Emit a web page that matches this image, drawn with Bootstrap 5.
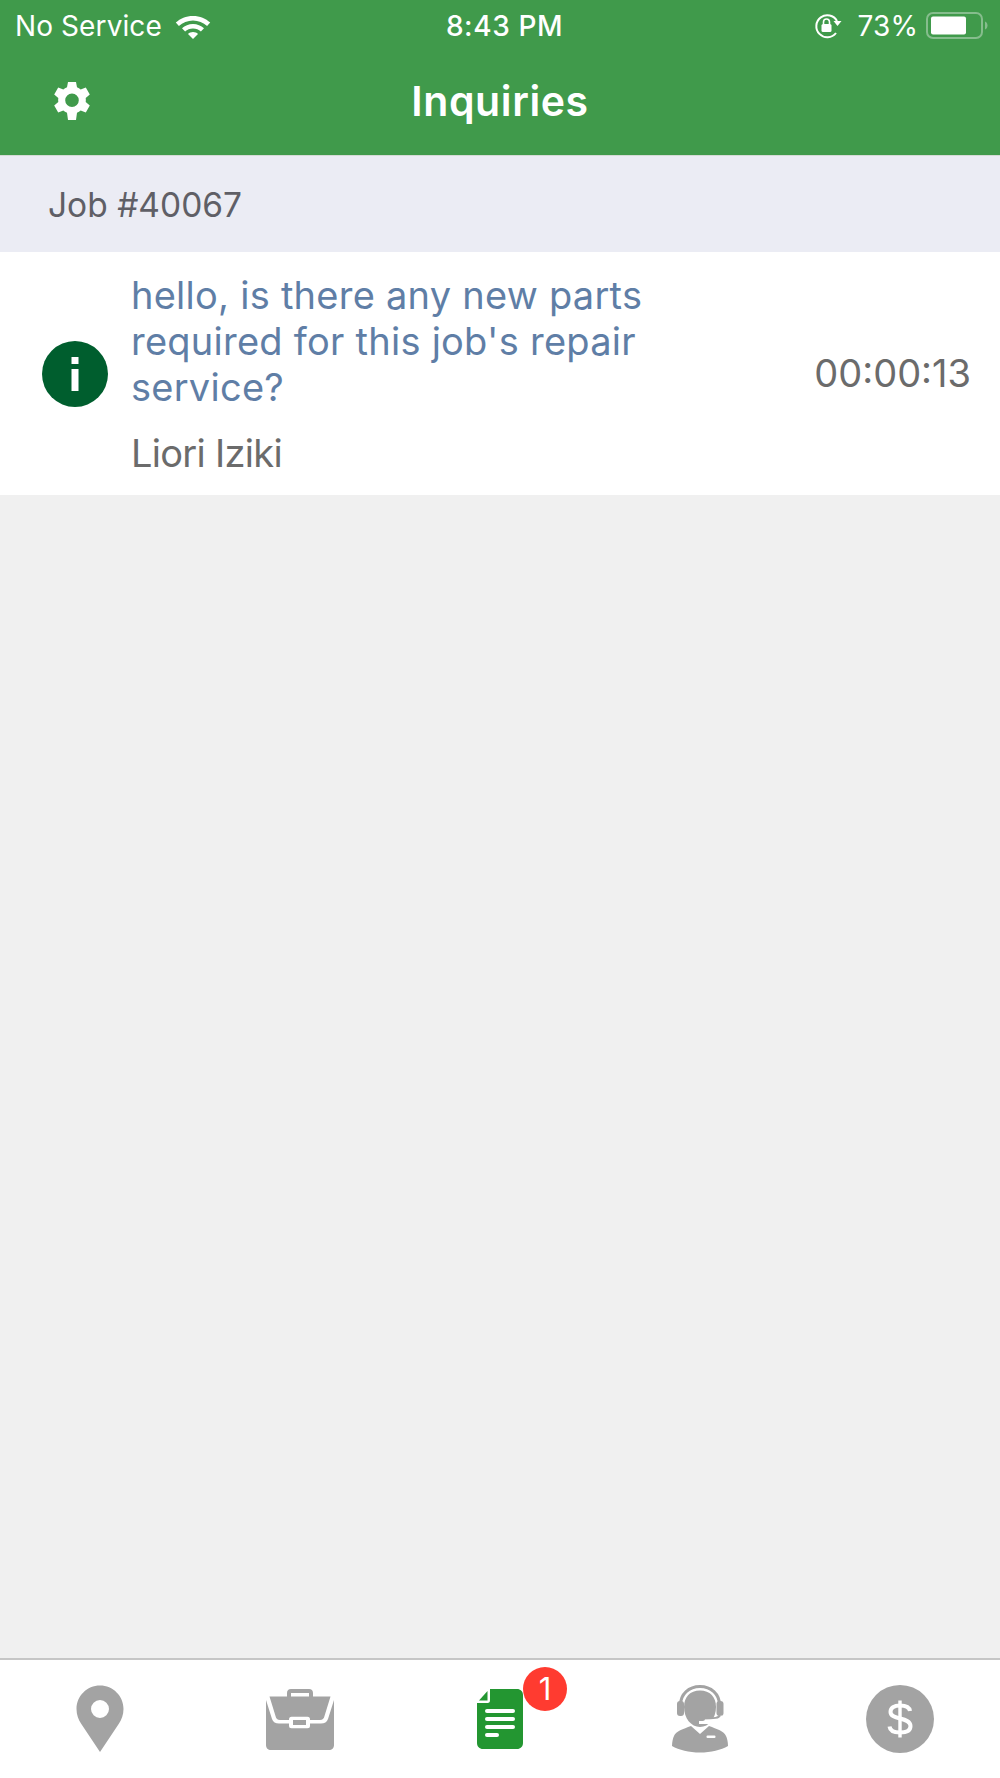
<!DOCTYPE html>
<html lang="en">

<head>
    <meta charset="UTF-8">
    <title>Inquiries</title>
    <meta name="viewport" content="width=device-width, initial-scale=1">
    <link href="https://cdn.jsdelivr.net/npm/bootstrap@5.3.3/dist/css/bootstrap.min.css" rel="stylesheet">
    <style>
        html, body { height: 100%; }
        body {
            font-family: Inter, "Liberation Sans", sans-serif;
            background: #f0f0f0;
        }
        .app-shell { height: 1778px; }

        /* header */
        .app-header { background: #409a4b; height: 155px; color: #fff; }
        .status-row {
            display: grid;
            grid-template-columns: 1fr auto 1fr;
            align-items: center;
            height: 52px;
            padding: 0 10px 0 15px;
            font-size: 28px;
            letter-spacing: .1px;
        }
        .status-left { gap: 13px; }
        .status-time { font-weight: 500; letter-spacing: .6px; padding-left: 4px; }
        .title-row { height: 103px; padding-bottom: 3px; position: relative; }
        .title-row h1 { font-size: 41px; font-weight: 600; letter-spacing: .6px; margin: 0; }
        .gear-btn { position: absolute; left: 52px; top: 29px; line-height: 0; }

        /* job band */
        .job-band {
            background: #ebecf4;
            border-top: 1px solid #d4dbd5;
            height: 97px;
            padding: 2px 0 0 48px;
            font-size: 33.5px;
            color: #5f5f66;
        }

        /* inquiry row */
        .inquiry-row { height: 243px; padding: 0 29px 0 42px; }
        .info-dot {
            width: 66px; height: 66px;
            background: #005e2e;
            flex: none;
            margin-right: 23px;
        }
        .msg-text { font-size: 38px; line-height: 46px; letter-spacing: .25px; color: #5f7ea6; width: 540px; }
        .msg-author { font-size: 38px; line-height: 46px; letter-spacing: -.7px; color: #6b6b6b; margin-top: 20px; }
        .msg-time { font-size: 38px; color: #6b6b6b; }

        /* tab bar */
        .tab-bar { height: 120px; border-top: 2px solid #c6c6c6; }
        .tab-item { width: 200px; height: 118px; position: relative; }
        .tab-count {
            position: absolute;
            left: 123px; top: 7px;
            width: 44px; height: 44px;
            background: #ff3b30;
            color: #fff;
            font-size: 31px;
        }
    </style>
</head>

<body>
    <div class="app-shell d-flex flex-column">
        <header class="app-header">
            <div class="status-row">
                <div class="status-left d-flex align-items-center">
                    <span>No Service</span>
                    <svg width="36" height="26" viewBox="0 0 36 26" fill="#fff">
                        <path d="M18 3C11 3 5.300 5.500 .8 9.600L3.900 13C7.700 9.600 12.600 7.500 18 7.500S28.300 9.600 32.100 13L35.200 9.600C30.700 5.500 25 3 18 3Z"/>
                        <path d="M18 11C13.700 11 9.900 12.600 7 15.300L10.100 18.600C12.200 16.700 14.900 15.500 18 15.500S23.800 16.700 25.900 18.600L29 15.300C26.100 12.600 22.300 11 18 11Z"/>
                        <path d="M18 19C16 19 14.300 19.700 13 20.900L18 26L23 20.900C21.700 19.700 20 19 18 19Z"/>
                    </svg>
                </div>
                <div class="status-time">8:43 PM</div>
                <div class="d-flex align-items-center justify-content-end">
                    <svg class="me-3" width="28" height="26" viewBox="0 0 28 26">
                        <path d="M22 20A11 11 0 1 1 23 8" fill="none" stroke="#fff" stroke-width="2"/>
                        <path d="M19.500 8H27.500L23.500 13Z" fill="#fff"/>
                        <rect x="7.500" y="11" width="10" height="8" rx="1.500" fill="#fff"/>
                        <path d="M9.500 11V9A3 3 0 0 1 15.500 9V11" fill="none" stroke="#fff" stroke-width="1.600"/>
                    </svg>
                    <span class="me-2">73%</span>
                    <svg width="64" height="28" viewBox="0 0 64 28">
                        <rect x="1" y="1" width="55" height="25" rx="6" fill="none" stroke="#86bd8d" stroke-width="2"/>
                        <rect x="5" y="4.500" width="35" height="18" rx="2" fill="#fff"/>
                        <path d="M59 9.500C61 10.500 61.500 12 61.500 13.500S61 16.500 59 17.500Z" fill="#86bd8d"/>
                    </svg>
                </div>
            </div>
            <div class="title-row d-flex align-items-center justify-content-center">
                <a class="gear-btn" href="#" aria-label="Settings">
                    <svg width="40" height="40" viewBox="0 0 40 40" fill="#fff">
                        <path fill-rule="evenodd" d="M16 1H24L25 6.300C26.400 6.800 27.600 7.500 28.700 8.400L33.800 6.600L37.800 13.500L33.700 17C33.900 18.400 33.900 19.700 33.700 21L37.800 24.500L33.800 31.400L28.700 29.600C27.600 30.500 26.400 31.200 25 31.700L24 39H16L15 31.700C13.600 31.200 12.400 30.500 11.300 29.600L6.200 31.400L2.200 24.500L6.300 21C6.100 19.700 6.100 18.400 6.300 17L2.200 13.500L6.200 6.600L11.300 8.400C12.400 7.500 13.600 6.800 15 6.300ZM20 12.500A6.800 6.800 0 1 0 20 26.100A6.800 6.800 0 1 0 20 12.500Z"/>
                    </svg>
                </a>
                <h1>Inquiries</h1>
            </div>
        </header>

        <div class="job-band d-flex align-items-center">Job #40067</div>

        <div class="inquiry-row bg-white d-flex align-items-center">
            <div class="info-dot rounded-circle d-flex align-items-center justify-content-center">
                <svg width="8" height="34" viewBox="0 0 8 34" fill="#fff">
                    <rect x=".5" y="0" width="7" height="7"/>
                    <rect x=".5" y="12" width="7" height="22"/>
                </svg>
            </div>
            <div class="flex-grow-1">
                <div class="msg-text">hello, is there any new parts required for this job's repair service?</div>
                <div class="msg-author">Liori Iziki</div>
            </div>
            <div class="msg-time">00:00:13</div>
        </div>

        <div class="flex-grow-1"></div>

        <nav class="tab-bar bg-white d-flex">
            <a class="tab-item d-flex align-items-center justify-content-center" href="#" aria-label="Map">
                <svg width="48" height="68" viewBox="0 0 48 68" fill="#a3a3a3">
                    <path fill-rule="evenodd" d="M24 .5C11 .5.500 11 .500 24C.500 30 2.500 34.500 5 38.500L24 67L43 38.500C45.500 34.500 47.500 30 47.500 24C47.500 11 37 .5 24 .5ZM24 15A9 9 0 1 1 24 33A9 9 0 1 1 24 15Z"/>
                </svg>
            </a>
            <a class="tab-item d-flex align-items-center justify-content-center" href="#" aria-label="Jobs">
                <svg width="68" height="62" viewBox="0 0 68 62" fill="#a3a3a3">
                    <path d="M21 9V5C21 2.500 22.500 1 25 1H43C45.500 1 47 2.500 47 5V9H43V5H25V9Z"/>
                    <path d="M3.500 8.600H64.500L58.500 28C58 30.500 56.500 32 54 32H14C11.500 32 10 30.500 9.500 28Z"/>
                    <path d="M0 12L6 31C7 34 9.500 35.500 13 35.500H55C58.500 35.500 61 34 62 31L68 12V57C68 60 66 62 63 62H5C2 62 0 60 0 57Z"/>
                    <rect x="23" y="28.700" width="21" height="11.600" rx="2.500" fill="#fff"/>
                    <rect x="27" y="32" width="13" height="5" fill="#a3a3a3"/>
                </svg>
            </a>
            <a class="tab-item d-flex align-items-center justify-content-center" href="#" aria-label="Inquiries">
                <svg width="46" height="60" viewBox="0 0 46 60">
                    <path d="M13 0H40C43.500 0 46 2.500 46 6V54C46 57.500 43.500 60 40 60H6C2.500 60 0 57.500 0 54V14H10.500C12.500 14 13 13 13 11Z" fill="#239631"/>
                    <path d="M10.500 2V11.500H2Z" fill="#239631"/>
                    <g fill="#fff">
                        <rect x="8" y="20" width="30" height="4" rx="2"/>
                        <rect x="8" y="28" width="30" height="4" rx="2"/>
                        <rect x="8" y="36" width="30" height="4" rx="2"/>
                        <rect x="8" y="44" width="14" height="4" rx="2"/>
                    </g>
                </svg>
                <span class="tab-count rounded-circle d-flex align-items-center justify-content-center">1</span>
            </a>
            <a class="tab-item d-flex align-items-center justify-content-center" href="#" aria-label="Support">
                <svg width="56" height="68" viewBox="0 0 56 68" fill="#a3a3a3">
                    <path d="M8.500 20C8.500 9 17 1.500 28 1.500S47.500 9 47.500 20" fill="none" stroke="#a3a3a3" stroke-width="3"/>
                    <path d="M28 5.500C38 5.500 44 12 44 22C44 33 37 42 28 42S12 33 12 22C12 12 18 5.500 28 5.500Z"/>
                    <rect x="5" y="16" width="7" height="15" rx="3"/>
                    <rect x="44.500" y="16" width="7" height="15" rx="3"/>
                    <path d="M48 30C47.500 33 44 33 27 33.500V39H38C44 38 48 36 50 31Z" fill="#fff"/>
                    <path d="M48 30C47.500 33 43 33.500 29 33.500" fill="none" stroke="#a3a3a3" stroke-width="2"/>
                    <rect x="25" y="31" width="8" height="5" rx="2.500"/>
                    <path d="M19 41L28 49L37 41C45 44 52 46 54 51C55 53 56 57 56 61C49 65 39 67.500 28 67.500S7 65 0 61C0 57 1 53 2 51C4 46 11 44 19 41Z"/>
                    <rect x="34.500" y="50.500" width="9" height="2.500" rx="1" fill="#fff"/>
                </svg>
            </a>
            <a class="tab-item d-flex align-items-center justify-content-center" href="#" aria-label="Payments">
                <svg width="68" height="68" viewBox="0 0 68 68">
                    <circle cx="34" cy="34" r="34" fill="#a3a3a3"/>
                    <path d="M44 26C43.500 22.500 40 20.500 34 20.500C28 20.500 24.500 23 24.500 27C24.500 35.500 44.500 31.500 44.500 41C44.500 45.500 40 47.500 34 47.500C28 47.500 24 45.500 23.500 41.500" fill="none" stroke="#fff" stroke-width="4"/>
                    <rect x="32.300" y="15.500" width="3.400" height="37" fill="#fff"/>
                </svg>
            </a>
        </nav>
    </div>

    <script src="https://cdn.jsdelivr.net/npm/bootstrap@5.3.3/dist/js/bootstrap.bundle.min.js"></script>
</body>

</html>
